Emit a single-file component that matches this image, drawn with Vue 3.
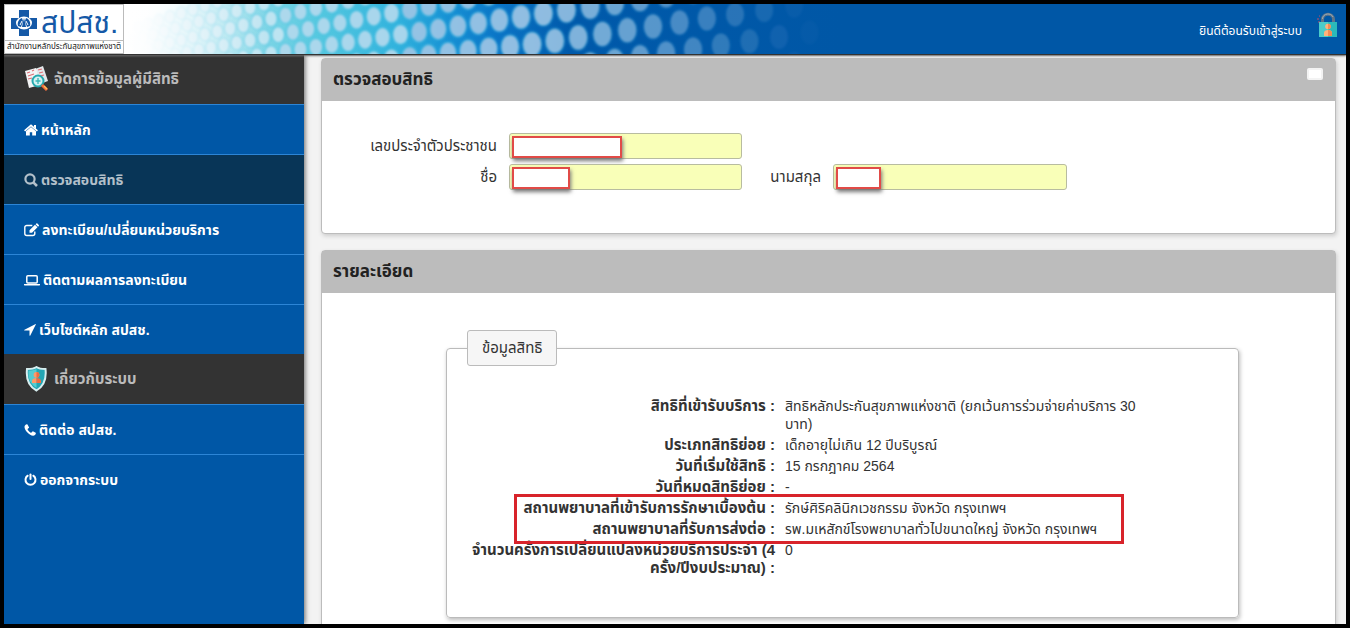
<script setup>
const menu = [
  { id: 'home', label: 'หน้าหลัก', w: 14 },
  { id: 'search', label: 'ตรวจสอบสิทธิ', w: 14, active: true },
  { id: 'edit', label: 'ลงทะเบียน/เปลี่ยนหน่วยบริการ', w: 15 },
  { id: 'laptop', label: 'ติดตามผลการลงทะเบียน', w: 16 },
  { id: 'arrow', label: 'เว็บไซต์หลัก สปสช.', w: 12 },
]
const about = [
  { id: 'phone', label: 'ติดต่อ สปสช.', w: 12 },
  { id: 'power', label: 'ออกจากระบบ', w: 13 },
]
const details = [
  ['สิทธิที่เข้ารับบริการ :', 'สิทธิหลักประกันสุขภาพแห่งชาติ (ยกเว้นการร่วมจ่ายค่าบริการ 30 บาท)'],
  ['ประเภทสิทธิย่อย :', 'เด็กอายุไม่เกิน 12 ปีบริบูรณ์'],
  ['วันที่เริ่มใช้สิทธิ :', '15 กรกฎาคม 2564'],
  ['วันที่หมดสิทธิย่อย :', '-'],
  ['สถานพยาบาลที่เข้ารับการรักษาเบื้องต้น :', 'รักษ์ศิริคลินิกเวชกรรม จังหวัด กรุงเทพฯ'],
  ['สถานพยาบาลที่รับการส่งต่อ :', 'รพ.มเหสักข์โรงพยาบาลทั่วไปขนาดใหญ่ จังหวัด กรุงเทพฯ'],
  ['จำนวนครั้งการเปลี่ยนแปลงหน่วยบริการประจำ (4 ครั้ง/ปีงบประมาณ) :', '0'],
]

// Honeycomb dots: the spacing widens towards the right and every other row is shifted by half a step.
const dots = []
for (let row = -4; row <= 3; row++) {
  for (let k = -26; k <= 12; k++) {
    const t = k + (row % 2 ? 0.5 : 0)
    const x = 521 + 710 * (Math.exp(0.031 * t) - 1)
    if (x < 130 || x > 825) continue
    const gap = Math.min(29, 12 + (x - 150) * 0.045)
    const y = 13 - (x - 520) * 0.147 + row * gap
    if (y < -14 || y > 64) continue
    const step = 22 + (x - 521) * 0.031
    const fade = x < 540 ? 1 : Math.max(0.04, 1 - (x - 540) / 270)
    dots.push({ x: x - 124, y, rx: Math.min(9, step * 0.4), ry: Math.min(12, step * 0.52), o: fade * 0.82 })
  }
}
</script>

<template>
  <div class="app">
    <header class="top">
      <svg class="dots" width="720" height="50" aria-hidden="true">
        <defs>
          <linearGradient id="sky">
            <stop offset="0" stop-color="#fff" />
            <stop offset="0.09" stop-color="#cdeff5" />
            <stop offset="0.17" stop-color="#8edbe8" />
            <stop offset="0.27" stop-color="#55c8df" />
            <stop offset="0.38" stop-color="#31b2dd" />
            <stop offset="0.45" stop-color="#1791d4" />
            <stop offset="0.52" stop-color="#0a74c6" />
            <stop offset="0.62" stop-color="#0059aa" />
            <stop offset="1" stop-color="#0057a6" />
          </linearGradient>
          <linearGradient id="veil">
            <stop offset="0" stop-color="#fff" />
            <stop offset="0.03" stop-color="#fff" stop-opacity="0.95" />
            <stop offset="0.2" stop-color="#fff" stop-opacity="0" />
          </linearGradient>
          <filter id="soft"><feGaussianBlur stdDeviation="0.9" /></filter>
          <filter id="glow"><feGaussianBlur stdDeviation="1.6" /></filter>
        </defs>
        <rect width="720" height="50" fill="url(#sky)" />
        <g filter="url(#glow)" fill="#45bfe4">
          <ellipse v-for="(d, i) in dots" :key="i" :cx="d.x" :cy="d.y" :rx="d.rx + 1" :ry="d.ry + 1" :opacity="d.o * d.o * 0.8" />
        </g>
        <g filter="url(#soft)">
          <ellipse v-for="(d, i) in dots" :key="i" :cx="d.x" :cy="d.y" :rx="d.rx" :ry="d.ry" :fill="d.x < 160 ? '#d3eaf4' : d.x < 280 ? '#bfdcee' : '#a8c6e5'" :opacity="d.o" />
        </g>
        <rect width="720" height="50" fill="url(#veil)" />
      </svg>
      <a class="logo" href="#" aria-label="สปสช.">
        <span class="logo-main">
          <svg width="30" height="28" viewBox="0 0 30 28" aria-hidden="true">
            <path d="M10 1h10v8h8v11h-8v7H10v-7H2V9h8z" fill="#1559a7" />
            <ellipse cx="15" cy="14" rx="8" ry="6.500" fill="#fff" />
            <path d="M9 17c-1-4 1-7 4-8l1 3-2 6zM21 17c1-4-1-7-4-8l-1 3 2 6zM14 13l1-4 1 4 1 5h-4z" fill="#1559a7" />
            <path d="M11 16l2-4M19 16l-2-4" stroke="#fff" stroke-width="1" />
          </svg>
          <span>สปสช.</span>
        </span>
        <span class="logo-sub">สำนักงานหลักประกันสุขภาพแห่งชาติ</span>
      </a>
      <span class="welcome">ยินดีต้อนรับเข้าสู่ระบบ</span>
      <svg class="lock" width="21" height="26" viewBox="0 0 21 26" aria-hidden="true">
        <path d="M5.500 11V7.500c0-7 11-7 11 0V11" fill="none" stroke="#607486" stroke-width="3" />
        <path d="M5.500 7c0-6 9-6.500 10.500-2" fill="none" stroke="#9aabb8" stroke-width="1" />
        <path d="M0 7h2M1 10h2M2 4h1" stroke="#c34c65" />
        <rect x="2" y="10" width="18" height="15" fill="#2bb9ba" />
        <path d="M2 10h9v15H2z" fill="#4bcbc9" />
        <circle cx="11" cy="14.500" r="2.800" fill="#ffb27b" />
        <path d="M7 24v-3c0-2 1.500-3 4-3s4 1 4 3v3z" fill="#ffb27b" />
        <path d="M11 11.700a2.800 2.800 0 0 1 0 5.600zM11 18c2.500 0 4 1 4 3v3h-4z" fill="#f28a55" />
      </svg>
    </header>

    <div class="shell">
      <nav class="side">
        <h2 class="group">
          <svg width="26" height="26" viewBox="0 0 26 26" aria-hidden="true">
            <path d="M11 3l8-3 5 15-8 3z" fill="#e3e8eb" />
            <path d="M1 5l11-3 4 17-11 3z" fill="#f3f4f5" />
            <path d="M3 7l3-1M8 5l2-1M14 4l4-1M4 10l6-2M15 7l4-1M4 13l4-1M16 10l4-1" stroke="#de7076" stroke-width="1.200" />
            <circle cx="14" cy="15" r="5.500" fill="#d4f2f3" stroke="#25a9ae" stroke-width="2" />
            <path d="M14 12v6M11.500 15h5" stroke="#35b5b5" stroke-width="1.300" />
            <path d="M18 19l5 5" stroke="#f36c3d" stroke-width="3" />
            <path d="M20 20l3 3" stroke="#ffc259" stroke-width="1.200" />
          </svg>
          <span>จัดการข้อมูลผู้มีสิทธิ</span>
        </h2>
        <a v-for="m in menu" :key="m.id" href="#" class="item" :class="{ active: m.active }">
          <svg :width="m.w" height="14" :viewBox="`0 0 ${m.w} 14`" aria-hidden="true">
            <template v-if="m.id === 'home'">
              <path d="M7 4L2 8.300v4.200h3.800V9.200h2.400v3.300H12V8.300z" fill="currentColor" />
              <path d="M.6 7.800L7 2.300l6.400 5.500" fill="none" stroke="currentColor" stroke-width="1.700" />
              <path d="M10 2h2v4l-2-2z" fill="currentColor" />
            </template>
            <template v-else-if="m.id === 'search'">
              <circle cx="6" cy="6" r="4.600" fill="none" stroke="currentColor" stroke-width="2.200" />
              <path d="M9.300 9.300l3.700 3.700" stroke="currentColor" stroke-width="2.600" />
            </template>
            <template v-else-if="m.id === 'edit'">
              <path d="M9 2.500H3.500a2 2 0 0 0-2 2v6a2 2 0 0 0 2 2h6a2 2 0 0 0 2-2V8.500" transform="translate(-.7 0)" fill="none" stroke="currentColor" stroke-width="1.400" />
              <path d="M5.500 7.300L11 1.800l2.500 2.500L8 9.800H5.500zM11.600 1.300l.8-.8a.8.8 0 0 1 1 0l1.400 1.400a.8.8 0 0 1 0 1l-.8.8z" fill="currentColor" />
            </template>
            <template v-else-if="m.id === 'laptop'">
              <rect x="2.800" y="2.700" width="10.400" height="7.300" rx="1" fill="none" stroke="currentColor" stroke-width="1.500" />
              <path d="M0 11h16v.7c0 .5-.7.900-1.300.9H1.300C.7 12.600 0 12.200 0 11.700z" fill="currentColor" />
            </template>
            <path v-else d="M11.800 1.400L6.300 12.500a.4.4 0 0 1-.8-.2V7.500H.7a.4.4 0 0 1-.2-.8l10.700-5.500c.4-.2.800 0 .6.200z" fill="currentColor" />
          </svg>
          <span>{{ m.label }}</span>
        </a>
        <h2 class="group">
          <svg width="26" height="26" viewBox="0 0 26 26" aria-hidden="true">
            <path d="M12.500 1c3 2 6 2 9 2 1 9-1 17-9 21.500C4 20 2 12 3 3c3 0 6.500 0 9.500-2z" fill="#23a6b4" stroke="#d7eef0" stroke-width="2" />
            <path d="M12.500 3c-3 1-5 1.500-8 1.500-.5 7 1 13 8 17.500z" fill="#54ccd1" />
            <circle cx="12.500" cy="8.800" r="2.900" fill="#ff9969" />
            <path d="M8 17v-2c0-2 2-3 4.500-3v5z" fill="#ff9969" />
            <path d="M12.500 5.900a2.900 2.900 0 0 1 0 5.800V12c2.500 0 4.500 1 4.500 3v2h-4.500z" fill="#ee6c42" />
          </svg>
          <span>เกี่ยวกับระบบ</span>
        </h2>
        <a v-for="m in about" :key="m.id" href="#" class="item">
          <svg :width="m.w" height="14" :viewBox="`0 0 ${m.w} 14`" aria-hidden="true">
            <path v-if="m.id === 'phone'" d="M.5 4C.5 2.500 1.500 1.500 3 1.200l.5.200 1.600 3c0 .5-1.500 1.200-1.500 1.800 0 .9 2.600 3.500 3.500 3.500.6 0 1.300-1.500 1.800-1.500l2.800 1.600.2.500c-.3 1.500-1.300 2.400-2.800 2.400C5.500 12.500.5 7.500.5 4z" fill="currentColor" />
            <template v-else>
              <path d="M3.700 2.700a5 5 0 1 0 5.600 0" fill="none" stroke="currentColor" stroke-width="2" stroke-linecap="round" />
              <path d="M6.500 1.500V6" stroke="currentColor" stroke-width="2" stroke-linecap="round" />
            </template>
          </svg>
          <span>{{ m.label }}</span>
        </a>
      </nav>

      <main class="main">
        <section class="panel">
          <div class="panel-head">
            <h1>ตรวจสอบสิทธิ</h1>
            <button class="collapse" type="button" aria-label="ย่อ"></button>
          </div>
          <form class="form">
            <label for="pid">เลขประจำตัวประชาชน</label>
            <div class="field"><input id="pid" type="text" readonly /><i class="mask mask-long"></i></div>
            <label class="first" for="fname">ชื่อ</label>
            <div class="field"><input id="fname" type="text" readonly /><i class="mask mask-mid"></i></div>
            <label for="lname">นามสกุล</label>
            <div class="field"><input id="lname" type="text" readonly /><i class="mask mask-short"></i></div>
          </form>
        </section>

        <section class="panel">
          <div class="panel-head"><h1>รายละเอียด</h1></div>
          <div class="detail">
            <fieldset>
              <legend>ข้อมูลสิทธิ</legend>
              <dl>
                <template v-for="d in details" :key="d[0]">
                  <dt>{{ d[0] }}</dt>
                  <dd>{{ d[1] }}</dd>
                </template>
                <i class="highlight"></i>
              </dl>
            </fieldset>
          </div>
        </section>
      </main>
    </div>
  </div>
</template>

<style>
body {
  margin: 0;
}
</style>

<style scoped>
* {
  box-sizing: border-box;
}
.app {
  display: flex;
  flex-direction: column;
  height: 100vh;
  overflow: hidden;
  border: 4px solid #000;
  background: #f3f3f3;
  color: #333;
  font-family: "Liberation Sans", "Noto Sans Thai", Loma, Garuda, sans-serif;
  font-size: 14px;
  line-height: 18px;
}
svg {
  flex: none;
}
.top {
  position: relative;
  z-index: 2;
  display: flex;
  flex: none;
  align-items: center;
  height: 50px;
  background: #0057a6;
  box-shadow: 0 1px 1px #333, 0 2px 2px #777;
}
.dots {
  position: absolute;
  left: 120px;
  top: 0;
}
.logo {
  position: relative;
  display: flex;
  flex-direction: column;
  width: 120px;
  height: 50px;
  border: 1px solid #bbb;
  background: #fff;
  color: #1559a7;
  text-decoration: none;
}
.logo-main {
  display: flex;
  align-items: center;
  gap: 2px;
  height: 36px;
  padding-left: 4px;
  border-bottom: 1px solid #bbb;
  font-size: 30px;
  line-height: 36px;
}
.logo-sub {
  color: #222;
  font-size: 8px;
  line-height: 12px;
  text-align: center;
  white-space: nowrap;
}
.welcome {
  margin-left: auto;
  padding-top: 4px;
  color: #fff;
  font-size: 12px;
}
.lock {
  margin: 0 8px 8px 15px;
}
.shell {
  display: flex;
  flex: 1;
  min-height: 0;
}
.side {
  position: relative;
  z-index: 1;
  flex: none;
  width: 300px;
  background: #0057a6;
  box-shadow: 1px 0 5px #666;
}
.group,
.item {
  display: flex;
  align-items: center;
  height: 50px;
  margin: 0;
  padding: 0 20px;
  font-size: 14px;
  font-weight: bold;
}
.group {
  gap: 4px;
  background: #333;
  color: #bbb;
  font-size: 15px;
}
.item {
  gap: 3px;
  border-top: 1px solid #2c85d6;
  color: #fff;
  text-decoration: none;
}
.item.active {
  background: #083557;
  color: #b3c0ca;
}
.main {
  display: flex;
  flex: 1;
  flex-direction: column;
  gap: 16px;
  min-width: 0;
  padding: 4px 10px 0 17px;
}
.panel {
  flex: none;
  border: 1px solid #bcbcbc;
  border-radius: 4px;
  background: #fff;
  box-shadow: 1px 2px 4px #ccc;
}
.panel-head {
  display: flex;
  align-items: center;
  justify-content: space-between;
  height: 42px;
  padding: 0 12px 0 11px;
  background: #bcbcbc;
}
.panel-head h1 {
  margin: 0;
  color: #222;
  font-size: 17px;
  line-height: 20px;
}
.collapse {
  width: 16px;
  height: 12px;
  margin-bottom: 12px;
  padding: 0;
  border: 2px solid #f3f3f3;
  border-radius: 2px;
  background: #fff;
}
.form {
  display: grid;
  grid-template-columns: 175px 233px 67px 234px;
  column-gap: 12px;
  row-gap: 5px;
  align-items: center;
  padding: 32px 0 43px;
}
.form label {
  font-size: 15px;
  text-align: right;
}
.form .first {
  grid-column: 1;
}
.field {
  position: relative;
}
.field input {
  display: block;
  width: 100%;
  height: 26px;
  border: 1px solid #b8bca0;
  border-radius: 3px;
  background: #f9ffb8;
}
.mask {
  position: absolute;
  left: 3px;
  top: 3px;
  height: 22px;
  border: 2px solid #e14b47;
  background: #fff;
  box-shadow: 1px 3px 4px #777;
}
.mask-long {
  width: 110px;
}
.mask-mid {
  width: 58px;
}
.mask-short {
  width: 45px;
}
.detail {
  padding: 37px 96px 40px 124px;
}
fieldset {
  min-width: 0;
  margin: 0;
  padding: 31px 78px 40px 20px;
  border: 1px solid #bbb;
  border-radius: 4px;
  box-shadow: 1px 2px 4px #bbb;
}
legend {
  padding: 8px 14px;
  border: 1px solid #bbb;
  border-radius: 3px;
  background: #f6f6f6;
  font-size: 15px;
}
dl {
  position: relative;
  display: grid;
  grid-template-columns: 308px minmax(0, 1fr);
  gap: 3px 10px;
  margin: 0;
}
dt {
  font-size: 15px;
  font-weight: bold;
  text-align: right;
}
dd {
  margin: 0;
}
.highlight {
  position: absolute;
  left: 47px;
  top: 97px;
  width: 610px;
  height: 50px;
  border: 3px solid #d8232a;
}
</style>
